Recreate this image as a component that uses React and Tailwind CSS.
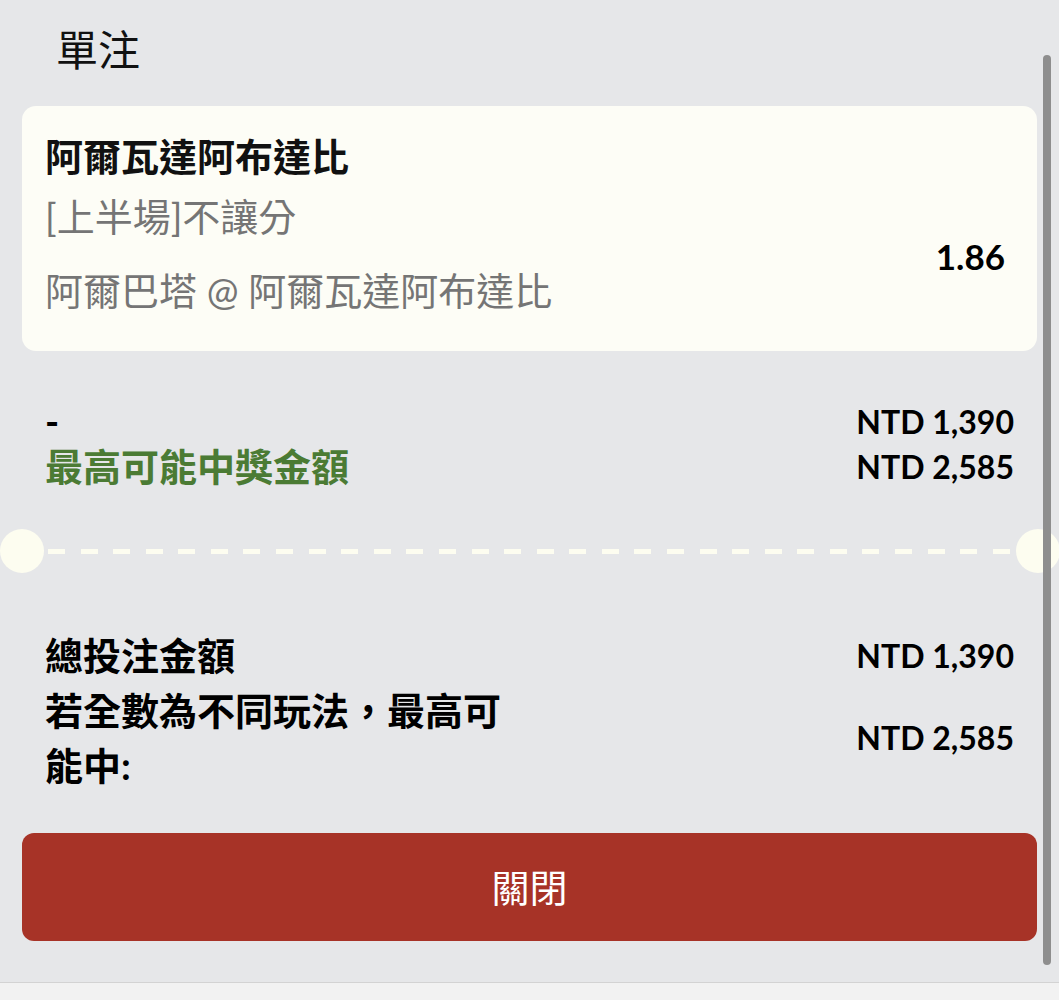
import React from "react";

const FONT = { fontFamily: 'Lato, "Noto Sans CJK TC", "Noto Sans CJK SC", sans-serif' };

const summary = [
  { label: "-", value: "NTD 1,390", green: false },
  { label: "最高可能中獎金額", value: "NTD 2,585", green: true },
];

const dashes = Array.from({ length: 30 }, (_, i) => i);

function Row({ label, value, className = "", labelClass = "" }) {
  return (
    <div className={`flex items-center justify-between ${className}`}>
      <div className={labelClass}>{label}</div>
      <div className="font-bold text-[32px] text-black">{value}</div>
    </div>
  );
}

export default function App() {
  return (
    <div
      className="relative w-[1059px] h-[1000px] overflow-hidden bg-[#e6e7e9] flex flex-col"
      style={FONT}
    >
      <div className="h-[106px] pt-[29px] pl-[56px]">
        <h1 className="text-[42px] leading-[42px] font-normal text-[#111]">單注</h1>
      </div>

      <div className="h-[245px] mx-[22px] rounded-[14px] bg-[#fdfdf6] pl-[23px] pr-[32px] flex items-start justify-between">
        <div className="pt-[27px] text-[38px] leading-[46px]">
          <p className="font-bold text-[#111]">阿爾瓦達阿布達比</p>
          <p className="mt-[14px] text-[#757575]">[上半場]不讓分</p>
          <p className="mt-[28px] text-[#757575]">阿爾巴塔 @ 阿爾瓦達阿布達比</p>
        </div>
        <div className="pt-[130px] text-[35px] leading-[40px] font-bold text-black">1.86</div>
      </div>

      <div className="pt-[48px] pl-[45px] pr-[45px]">
        {summary.map((r) => (
          <Row
            key={r.label}
            label={r.label}
            value={r.value}
            className="h-[45px]"
            labelClass={`text-[38px] leading-[45px] font-bold ${r.green ? "text-[#4b7b34]" : "text-black"}`}
          />
        ))}
      </div>

      <div className="mt-[40px] h-[44px] flex items-center">
        <div className="w-[44px] h-[44px] rounded-full bg-[#fdfdf0] shrink-0" />
        <div className="flex-1 mx-[4px] flex items-center justify-between pr-[2px]">
          {dashes.map((i) => (
            <div key={i} className="w-[17px] h-[5px] bg-[#fdfdf0]" />
          ))}
        </div>
        <div className="w-[44px] h-[44px] rounded-full bg-[#fdfdf0] shrink-0 -mr-[1px]" />
      </div>

      <div className="pt-[55px] pl-[45px] pr-[45px]">
        <Row
          label="總投注金額"
          value="NTD 1,390"
          labelClass="text-[38px] leading-[55px] font-bold text-black"
        />
        <Row
          label="若全數為不同玩法，最高可能中:"
          value="NTD 2,585"
          labelClass="w-[470px] text-[38px] leading-[55px] font-bold text-black"
        />
      </div>

      <button className="mt-[40px] mx-[22px] h-[108px] rounded-[12px] bg-[#a73327] text-white text-[38px] font-normal">
        關閉
      </button>

      <div className="mt-auto h-[18px] border-t border-[#d3d3d3] bg-[#f2f2f2]" />

      <div className="absolute left-[1043px] top-[55px] w-[8px] h-[910px] rounded-full bg-[#8e8e8e]" />
    </div>
  );
}
